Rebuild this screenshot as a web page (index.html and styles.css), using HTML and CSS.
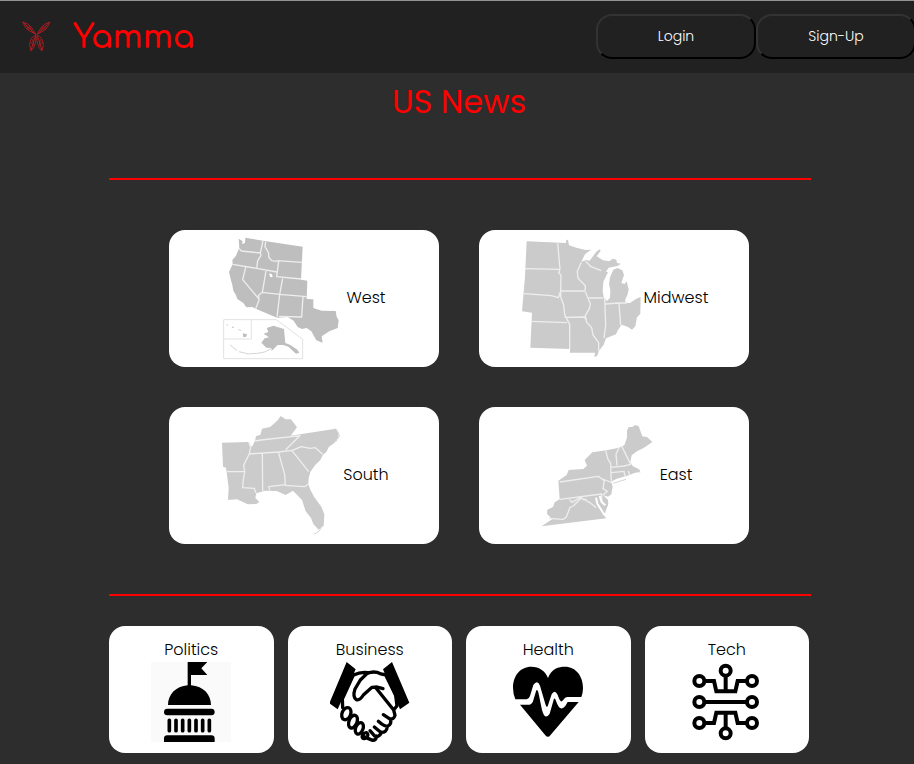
FILE: index.html
```html
<!DOCTYPE html>
<html lang="en">
<head>
<meta charset="utf-8">
<meta name="viewport" content="width=device-width, initial-scale=1">
<title>Yamma - US News</title>
<link rel="stylesheet" href="styles.css">
</head>
<body>
<header class="topbar">
  <a class="brand" href="#">
    <svg class="brand-mark" viewBox="66 64 87 93" aria-hidden="true">
      <g class="wing">
        <path d="M68 67Q88 73 95 84L107 103Q80 91 77 84ZM150 67Q130 73 123 84L112 103Q138 91 141 84ZM107 107Q91 112 89 135L93 154Q110 139 107 107ZM111 107Q128 112 130 135L126 154Q108 139 111 107Z"/>
        <path d="M72 70L108 106M146 70L110 106M79 77L86 91M87 77L96 96M139 77L132 91M131 77L122 96M106 110L93 152M113 110L126 152M91 127L101 137L98 119M128 127L118 137L121 119M90 146H97M122 146H129"/>
      </g>
    </svg>
    <span class="brand-name">Yamma</span>
  </a>
  <nav class="account">
    <button class="account-button" type="button">Login</button>
    <button class="account-button" type="button">Sign-Up</button>
  </nav>
</header>

<main class="content">
  <h1 class="title">US News</h1>
  <hr class="rule">
  <section class="regions" aria-label="Regions">
    <a class="card region" href="#">
      <svg class="map map-west" viewBox="171 39 360 360" aria-hidden="true">
        <path class="land" d="M221 41L233 49L231 57L240 54L241 38L294 47L413 65L408 164L427 167L425 222L445 223V249L470 257L512 258L515 275L521 286L518 309L493 319L470 334L473 353L454 346L439 319L425 309L411 312L398 306L386 287L368 276L336 278L272 251L262 246L244 247L235 234L217 222L213 211L205 197L202 180L197 162L192 141L203 118L202 105L213 92L223 68Z"/>
        <path class="borders" d="M222 70L229 78L286 84M294 47L286 84L288 91L278 107L275 130M203 118L275 130L336 141M302 50L300 65L311 84L311 96L320 107L335 109M335 107L411 112M341 109L335 155L408 162M242 127L233 164L281 221M303 138L292 202L281 211L282 226L272 251M291 202L344 208L425 215M353 160L344 208L336 277M414 214L410 276L342 274"/>
        <path class="lake" d="M312 145L321 148L323 156L316 157Z"/>
        <path class="inset" d="M176 284H334L413 343V401H176ZM176 342H259V284"/>
        <path class="land" d="M305 309L325 302L357 312L361 354L376 360L397 374L403 383L393 386L370 365L355 360L338 360L320 378L319 369L304 368L289 353L299 340L312 337L296 326L310 321ZM233 325L246 328L244 335L235 337ZM184 297L190 300L187 302ZM201 304L208 308L202 309ZM218 312L230 316L225 317Z"/>
        <path class="islands" d="M195 359Q205 369 216 376M222 380Q249 391 278 385Q300 384 318 371"/>
      </svg>
      <span>West</span>
    </a>
    <a class="card region" href="#">
      <svg class="map map-midwest" viewBox="135 39 360 360" aria-hidden="true">
        <path class="land light" d="M155 49L273 54L274 44L279 45L282 61L304 68L332 75L348 74L330 88L319 110L334 105L344 107L364 80L374 73L377 77L365 94L384 106L403 109L413 101L424 104L426 114L438 116L427 123L401 128L386 151L393 140L399 142L385 170L383 198L386 217L396 228L405 218L406 195L402 177L405 157L415 134L427 129L442 136L447 150L439 174L449 177L455 169L461 194L457 211L451 223V233L465 234L484 221L497 216L496 266L486 277L481 304L471 314L459 306L440 299L429 315L423 328L393 340L386 359L372 377L366 394L358 395L360 383L285 383V372L166 368L171 263L141 259L150 155Z"/>
        <path class="borders" d="M248 55L255 132L251 143L258 150L257 198M150 131L254 133M147 206L229 212L250 218L257 198H330M330 198L331 182L309 160L307 139L319 112M332 109L348 125L379 137M257 198V216L266 240L269 269L284 298V373M168 289L276 293M269 277L328 276L334 286M331 200L346 236L343 251L331 271L335 292L350 308L354 330L371 353V378M340 219H385M389 219L392 300L387 339M392 237L432 234L437 301M432 234H456"/>
      </svg>
      <span>Midwest</span>
    </a>
    <a class="card region" href="#">
      <svg class="map map-south" viewBox="164 39 360 360" aria-hidden="true">
        <path class="land light" d="M173 122L253 120L255 132L264 133L272 116L275 103L288 98L293 80L317 75L327 67L340 55L349 42L364 52L380 52L398 76L379 101L514 80L523 92L522 106L509 124L494 134L486 150L476 158L468 174L452 190L438 210L433 229L432 247L438 263L450 286L471 314L480 337L478 371L463 383L447 366L440 348L424 328L413 294L386 266L364 279L337 267L302 266L276 274L273 288L285 300L276 306L250 307L218 292L191 294L193 257L187 211L185 197L176 194Z"/>
        <path class="borders" d="M253 120L259 133L255 155L238 190L241 210L237 233L235 257L270 259L275 273M187 209H240M273 117L290 114L408 101M255 156L342 150L383 145L411 134L438 139L453 137L475 157M408 100L364 143M294 155L295 267M342 150L361 217L363 250L421 254L433 245M383 146L433 209M363 248L313 254L316 265"/>
        <path class="islands" d="M514 80L526 101L513 121M471 379Q462 393 448 397"/>
      </svg>
      <span>South</span>
    </a>
    <a class="card region" href="#">
      <svg class="map map-east" viewBox="186 39 360 360" aria-hidden="true">
        <path class="land light" d="M397 145L435 137L451 130L459 107V86L464 75L475 75L484 69L494 73L505 103L520 106L535 120L510 137L489 148L473 160L469 180L475 191L498 204L497 210L481 213L467 219L428 230L411 239L416 253L412 277L402 284L388 280L402 294L403 306L393 333L386 337L397 349L203 373L234 352L219 335L220 323L237 315L242 301L257 292L253 236L278 219L284 204L328 201L339 191L332 174L355 151Z"/>
        <path class="borders" d="M395 146L402 172L410 184L411 218L412 237M257 240L373 223L391 236L387 260L400 268L387 279M257 292L383 276L384 304M435 137L426 157L429 190M444 134L463 173L470 187M411 196L450 192L471 187M412 212L450 208L454 225M463 207L467 219M386 231L412 241M224 349L267 352L277 345L288 316L298 312L321 288L346 301L367 317M286 292L294 301L321 285L327 293L338 292"/>
        <path class="bay" d="M366 287L370 305L382 324L390 337M377 282L383 300L394 310"/>
        <path class="islands" d="M417 244L456 232M490 199L498 212"/>
      </svg>
      <span>East</span>
    </a>
  </section>
  <hr class="rule">
  <section class="topics" aria-label="Topics">
    <a class="card topic" href="#">
      <span>Politics</span>
      <svg class="icon" viewBox="138 216 240 240" aria-hidden="true">
        <path fill="#fafafa" d="M138 216H378V456H138Z"/>
        <path d="M248 216H307L289 235L307 255H258V286C296 288 318 315 318 345H189C189 315 212 288 248 286Z"/>
        <rect x="177" y="356" width="152" height="20" rx="10"/>
        <path d="M177 456V446Q177 436 187 436H319Q329 436 329 446V456Z"/>
        <path class="columns" d="M193 391V422M213 391V422M233 391V422M253 391V422M273 391V422M293 391V422M313 391V422"/>
      </svg>
    </a>
    <a class="card topic" href="#">
      <span>Business</span>
      <svg class="icon" viewBox="140 126 240 240" aria-hidden="true">
        <path d="M190 126L217 148L163 268L138 250ZM326 126L299 148L350 268L378 248Z"/>
        <g class="hand">
          <path d="M211 165Q233 154 254 158L231 180L215 207Q207 231 219 239Q229 243 240 225L266 202L281 201L299 206M245 164Q262 153 281 157Q296 165 306 163M211 163L177 237L178 263M306 163L337 226L341 257L331 270L278 204M331 270L335 286Q331 300 318 296L300 284M321 297Q326 314 312 319Q303 320 285 304M312 319Q310 339 292 337L273 321M295 337Q287 354 273 347L260 332M279 348Q279 361 268 361L241 350"/>
          <ellipse cx="189" cy="281" rx="13" ry="19" transform="rotate(22 189 281)"/>
          <ellipse cx="209" cy="305" rx="12" ry="20" transform="rotate(22 209 305)"/>
          <ellipse cx="228" cy="325" rx="11" ry="18" transform="rotate(22 228 325)"/>
          <ellipse cx="245" cy="347" rx="7" ry="10" transform="rotate(45 245 347)"/>
        </g>
      </svg>
    </a>
    <a class="card topic" href="#">
      <span>Health</span>
      <svg class="icon" viewBox="144 126 240 240" aria-hidden="true">
        <path d="M264 174C275 145 296 140 315 140C348 140 369 169 369 204Q369 219 364 231H322Q315 231 309 241Q303 249 298 238L292 223Q284 208 275 223L265 253Q261 270 256 252L240 197Q232 178 220 195L210 228Q207 237 200 238H166Q159 220 159 203C159 168 180 140 214 140C238 140 257 154 264 174Z"/>
        <path d="M180 254H208Q217 253 220 241L228 214Q231 205 235 217L246 270Q255 303 269 281L281 239Q284 231 288 243Q300 278 316 258L323 246H356L271 346Q264 355 256 346Z"/>
      </svg>
    </a>
    <a class="card topic" href="#">
      <span>Tech</span>
      <svg class="icon" viewBox="142 126 240 240" aria-hidden="true">
        <g class="circuit">
          <circle cx="258" cy="152" r="15"/><circle cx="179" cy="183" r="15"/><circle cx="337" cy="183" r="15"/>
          <circle cx="179" cy="246" r="15"/><circle cx="337" cy="246" r="15"/>
          <circle cx="179" cy="309" r="15"/><circle cx="337" cy="309" r="15"/><circle cx="258" cy="340" r="15"/>
          <path d="M194 183H223L230 214H287L294 183H322M258 167V214M194 246H322M194 309H223L230 278H287L294 309H322M258 278V325"/>
        </g>
      </svg>
    </a>
  </section>
</main>
</body>
</html>
```
FILE: styles.css
```css
* {
  box-sizing: border-box;
}

body {
  margin: 0;
  overflow-x: hidden;
  background: #2d2d2d;
  color: #000;
  font-family: Poppins, Inter, sans-serif;
  font-size: 16px;
  font-weight: 300;
}

a {
  color: inherit;
  text-decoration: none;
}

svg {
  display: block;
  flex: none;
}

.topbar {
  display: flex;
  align-items: center;
  justify-content: space-between;
  height: 73px;
  padding-bottom: 2px;
  border-top: 1px solid #929292;
  background: #212121;
}

.brand {
  display: flex;
  align-items: center;
  gap: 22px;
  padding-left: 22px;
  color: #f00;
}

.brand-mark {
  width: 29px;
  height: 31px;
}

.wing {
  fill: none;
  stroke: #a51d22;
  stroke-width: 3;
}

.brand-name {
  padding-top: 4px;
  font-family: Comfortaa, Inter, sans-serif;
  font-size: 32px;
  font-weight: 600;
  line-height: 40px;
}

.account {
  display: flex;
  flex: none;
  margin-right: -2px;
}

.account-button {
  width: 160px;
  height: 45px;
  border: 2px solid;
  border-color: #333 #000 #000 #333;
  border-radius: 16px;
  background: #212121;
  color: #fff;
  font: inherit;
  font-size: 14px;
}

.content {
  max-width: 704px;
  margin: 0 auto;
  padding: 0 0 11px 4px;
}

.title {
  margin: 0 0 47px;
  color: #f00;
  font-size: 32px;
  font-weight: 400;
  line-height: 58px;
  text-align: center;
}

.rule {
  height: 2px;
  margin: 0 -2px 0 0;
  border: 0;
  background: #f00;
}

.card {
  border-radius: 16px;
  background: #fff;
}

.regions {
  display: grid;
  grid-template-columns: repeat(auto-fit, 270px);
  justify-content: center;
  gap: 40px;
  padding: 50px 0;
}

.region {
  display: flex;
  align-items: center;
  justify-content: center;
  gap: 4px;
  height: 137px;
  padding-bottom: 2px;
}

.map {
  width: 120px;
  height: 120px;
  overflow: visible;
}

.land {
  fill: #bebebe;
}

.light {
  fill: #cbcbcb;
}

.borders {
  fill: none;
  stroke: #eee;
  stroke-width: 4;
  stroke-linejoin: round;
}

.lake {
  fill: #fff;
}

.bay {
  fill: none;
  stroke: #fff;
  stroke-width: 6;
}

.inset {
  fill: none;
  stroke: #e2e2e2;
  stroke-width: 3;
}

.islands {
  fill: none;
  stroke: #d5d5d5;
  stroke-width: 3;
}

.topics {
  display: grid;
  grid-template-columns: repeat(4, 1fr);
  gap: 14px;
  padding-top: 30px;
}

.topic {
  display: flex;
  flex-direction: column;
  align-items: center;
  padding: 11px 0;
  line-height: 25px;
}

.icon {
  width: 80px;
  height: 80px;
}

.columns {
  fill: none;
  stroke: #000;
  stroke-width: 11;
  stroke-linecap: round;
}

.hand {
  fill: none;
  stroke: #000;
  stroke-width: 10;
  stroke-linecap: round;
  stroke-linejoin: round;
}

.circuit {
  fill: none;
  stroke: #000;
  stroke-width: 12;
}
```
